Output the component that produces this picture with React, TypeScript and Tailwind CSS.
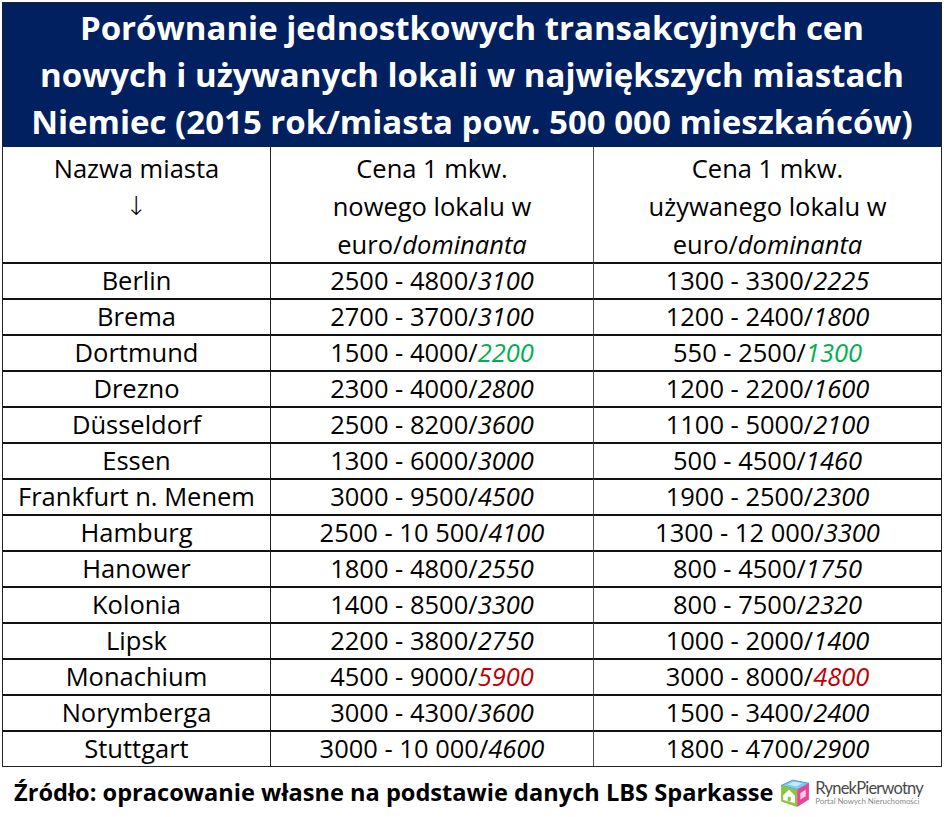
import React from 'react';

type Row = { city: string; nw: string; nwDom: string; uz: string; uzDom: string; tone?: 'green' | 'red' };

const rows: Row[] = [
  { city: 'Berlin', nw: '2500 - 4800/', nwDom: '3100', uz: '1300 - 3300/', uzDom: '2225' },
  { city: 'Brema', nw: '2700 - 3700/', nwDom: '3100', uz: '1200 - 2400/', uzDom: '1800' },
  { city: 'Dortmund', nw: '1500 - 4000/', nwDom: '2200', uz: '550 - 2500/', uzDom: '1300', tone: 'green' },
  { city: 'Drezno', nw: '2300 - 4000/', nwDom: '2800', uz: '1200 - 2200/', uzDom: '1600' },
  { city: 'Düsseldorf', nw: '2500 - 8200/', nwDom: '3600', uz: '1100 - 5000/', uzDom: '2100' },
  { city: 'Essen', nw: '1300 - 6000/', nwDom: '3000', uz: '500 - 4500/', uzDom: '1460' },
  { city: 'Frankfurt n. Menem', nw: '3000 - 9500/', nwDom: '4500', uz: '1900 - 2500/', uzDom: '2300' },
  { city: 'Hamburg', nw: '2500 - 10 500/', nwDom: '4100', uz: '1300 - 12 000/', uzDom: '3300' },
  { city: 'Hanower', nw: '1800 - 4800/', nwDom: '2550', uz: '800 - 4500/', uzDom: '1750' },
  { city: 'Kolonia', nw: '1400 - 8500/', nwDom: '3300', uz: '800 - 7500/', uzDom: '2320' },
  { city: 'Lipsk', nw: '2200 - 3800/', nwDom: '2750', uz: '1000 - 2000/', uzDom: '1400' },
  { city: 'Monachium', nw: '4500 - 9000/', nwDom: '5900', uz: '3000 - 8000/', uzDom: '4800', tone: 'red' },
  { city: 'Norymberga', nw: '3000 - 4300/', nwDom: '3600', uz: '1500 - 3400/', uzDom: '2400' },
  { city: 'Stuttgart', nw: '3000 - 10 000/', nwDom: '4600', uz: '1800 - 4700/', uzDom: '2900' },
];

const domColor = (tone?: Row['tone']) =>
  tone === 'green' ? 'text-[#00b050]' : tone === 'red' ? 'text-[#c00000]' : 'text-black';

function Logo() {
  return (
    <div className="flex items-center gap-[3px]">
      <svg width="34" height="30" viewBox="0 0 30 28">
        {/* top */}
        <path d="M2 7 L13 2 L28 5 L17 11 Z" fill="#7ccbf0" stroke="#3a8fc9" strokeWidth="0.8" />
        <path d="M8 6 L14 3.5 L22 5 L16 8 Z" fill="#fff" opacity="0.6" />
        {/* left face */}
        <path d="M2 7 L17 11 L17 27 L2 22 Z" fill="#8cc63f" />
        {/* right face */}
        <path d="M17 11 L28 5 L28 20 L17 27 Z" fill="#e9449a" />
        {/* house on left face */}
        <path d="M4 16 L9.5 11 L15 16.5 L15 23.5 L4 20.5 Z" fill="#fff" />
        <rect x="8.2" y="17.5" width="2.8" height="4.3" fill="#8cc63f" />
        <path d="M20 14 L25 11 L25 17 L20 20 Z" fill="#fff" opacity="0.75" />
      </svg>
      <div className="flex flex-col leading-none">
        <span className="text-[16.5px] text-[#4a4a4a] font-['Lato',sans-serif] tracking-[-0.8px]">RynekPierwotny</span>
        <span className="text-[8px] text-[#8a8a8a] font-['Lato',sans-serif] mt-[1px] tracking-[-0.1px]">Portal Nowych Nieruchomości</span>
      </div>
    </div>
  );
}

export default function App() {
  return (
    <div className="w-[945px] h-[817px] bg-white font-['Open_Sans',sans-serif] text-black">
      <div className="ml-[2px] mt-[2px] w-[940px] border-[1.5px] border-[#222]">
        <div className="bg-[#002060] text-white font-bold text-[33px] leading-[47px] text-center pt-[1px] pb-[2px]">
          <div>Porównanie jednostkowych transakcyjnych cen</div>
          <div>nowych i używanych lokali w największych miastach</div>
          <div>Niemiec (2015 rok/miasta pow. 500 000 mieszkańców)</div>
        </div>
        <div className="grid grid-cols-[268px_323px_1fr] text-[25.5px] text-center">
          <div className="border-r border-[#222] leading-[38px] h-[115px] pt-[2px]">
            <div>Nazwa miasta</div>
            <div className="font-['DejaVu_Sans',sans-serif] font-light text-[26px]">↓</div>
          </div>
          <div className="border-r border-[#555] leading-[38px] h-[115px] pt-[2px]">
            <div>Cena 1 mkw.</div>
            <div>nowego lokalu w</div>
            <div>
              euro/<span className="italic">dominanta</span>
            </div>
          </div>
          <div className="leading-[38px] h-[115px] pt-[2px]">
            <div>Cena 1 mkw.</div>
            <div>używanego lokalu w</div>
            <div>
              euro/<span className="italic">dominanta</span>
            </div>
          </div>
          {rows.map((r) => (
            <React.Fragment key={r.city}>
              <div className="border-t-2 border-r border-t-[#111] border-r-[#222] h-[36px] leading-[33px]">{r.city}</div>
              <div className="border-t-2 border-r border-t-[#111] border-r-[#555] h-[36px] leading-[33px]">
                {r.nw}
                <span className={`italic ${domColor(r.tone)}`}>{r.nwDom}</span>
              </div>
              <div className="border-t-2 border-t-[#111] h-[36px] leading-[33px]">
                {r.uz}
                <span className={`italic ${domColor(r.tone)}`}>{r.uzDom}</span>
              </div>
            </React.Fragment>
          ))}
        </div>
      </div>
      <div className="flex items-center pl-[14px] pr-[22px] mt-[8px]">
        <div className="font-bold text-[23.6px] whitespace-nowrap">
          Źródło: opracowanie własne na podstawie danych LBS Sparkasse
        </div>
        <div className="ml-auto">
          <Logo />
        </div>
      </div>
    </div>
  );
}
